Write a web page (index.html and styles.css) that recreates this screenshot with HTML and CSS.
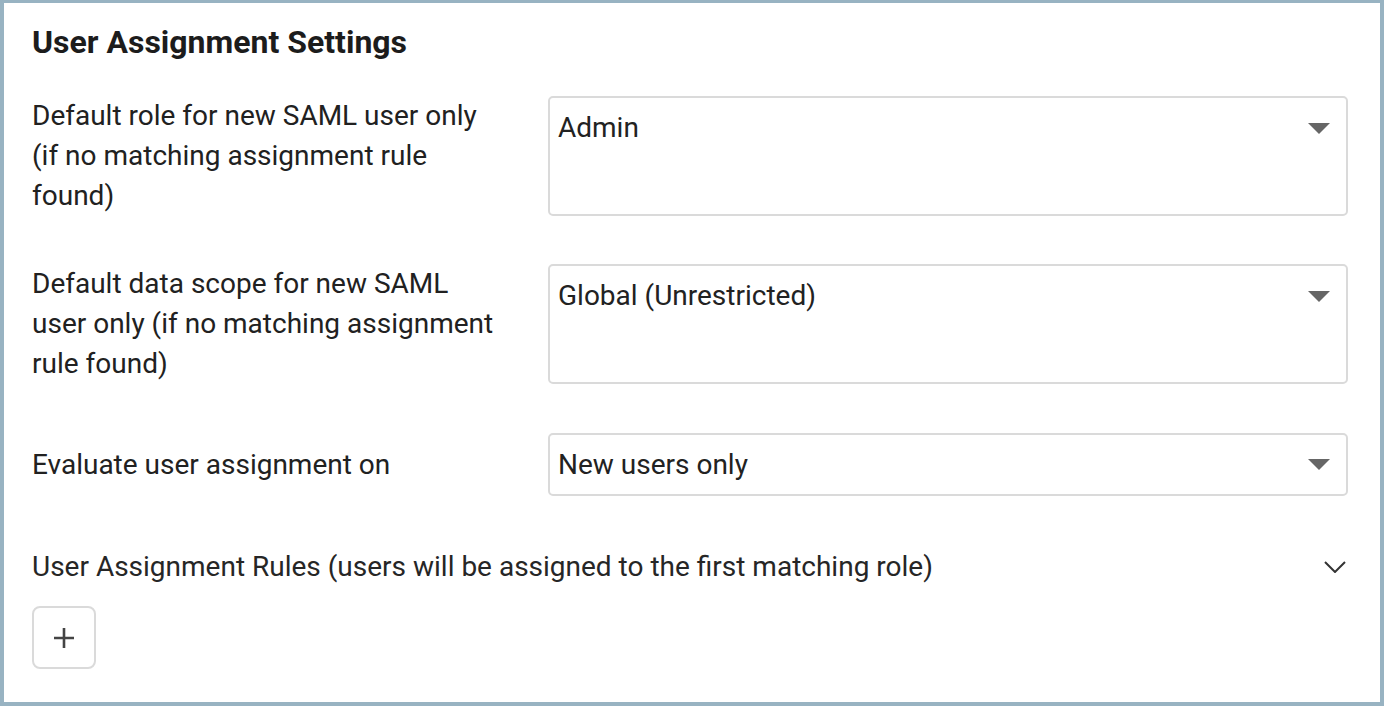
FILE: index.html
```html
<!DOCTYPE html>
<html lang="en">
<head>
<meta charset="utf-8">
<title>User Assignment Settings</title>
<link rel="stylesheet" href="styles.css">
</head>
<body>
<div class="panel">
  <h2 class="title">User Assignment Settings</h2>
  <div class="form">
    <div class="row">
      <div class="label">Default role for new SAML user only (if no matching assignment rule found)</div>
      <div class="select tall">
        <span class="value">Admin</span>
        <span class="caret"></span>
      </div>
    </div>
    <div class="row">
      <div class="label">Default data scope for new SAML user only (if no matching assignment rule found)</div>
      <div class="select tall">
        <span class="value">Global (Unrestricted)</span>
        <span class="caret"></span>
      </div>
    </div>
    <div class="row row-single">
      <div class="label">Evaluate user assignment on</div>
      <div class="select single">
        <span class="value">New users only</span>
        <span class="caret"></span>
      </div>
    </div>
  </div>
  <div class="rules-head">
    <span>User Assignment Rules (users will be assigned to the first matching role)</span>
    <svg class="chevron" width="22" height="12" viewBox="0 0 22 12"><path d="M1 1 L11 11 L21 1" fill="none" stroke="#333" stroke-width="2"/></svg>
  </div>
  <button class="add-btn" type="button" aria-label="Add rule">
    <svg width="22" height="22" viewBox="0 0 22 22"><path d="M11 1 V21 M1 11 H21" stroke="#444" stroke-width="2.6" fill="none"/></svg>
  </button>
</div>
</body>
</html>
```

FILE: styles.css
```css
* { box-sizing: border-box; }
html, body { margin: 0; padding: 0; background: #fff; }
body {
  font-family: Roboto, "Liberation Sans", Arial, sans-serif;
  color: #212121;
}
.panel {
  width: 1384px;
  height: 706px;
  border: 4px solid #98b3c2;
  border-top-width: 3px;
  padding: 19px 32px 0 28px;
  background: #fff;
}
.title {
  margin: 0;
  font-size: 32px;
  font-weight: 700;
  line-height: 40px;
  color: #1c1c1c;
}
.form {
  margin-top: 34px;
  display: flex;
  flex-direction: column;
  gap: 48px;
}
.row {
  display: grid;
  grid-template-columns: 468px 1fr;
  column-gap: 48px;
  align-items: stretch;
}
.row-single { margin-top: 1px; }
.label {
  font-size: 28px;
  line-height: 40px;
  align-self: center;
}
.select {
  border: 2px solid #dadada;
  border-radius: 5px;
  display: flex;
  justify-content: space-between;
  padding: 0 16px 0 8px;
  font-size: 28px;
  color: #222;
}
.select.tall {
  align-items: flex-start;
  padding-top: 10px;
  min-height: 120px;
}
.select.single {
  min-height: 63px;
  align-items: center;
}
.value { line-height: 40px; }
.caret {
  width: 0;
  height: 0;
  border-left: 11px solid transparent;
  border-right: 11px solid transparent;
  border-top: 11px solid #666;
  margin-top: 0;
  align-self: center;
}
.select.tall .caret { align-self: flex-start; margin-top: 15px; }
.rules-head {
  margin-top: 51px;
  display: flex;
  justify-content: space-between;
  align-items: center;
  font-size: 28px;
  line-height: 40px;
  color: #262626;
}
.chevron { margin-right: 2px; }
.add-btn {
  margin-top: 19px;
  width: 64px;
  height: 63px;
  border: 2px solid #dadada;
  border-radius: 8px;
  background: #fff;
  display: flex;
  align-items: center;
  justify-content: center;
  padding: 0;
}
```
